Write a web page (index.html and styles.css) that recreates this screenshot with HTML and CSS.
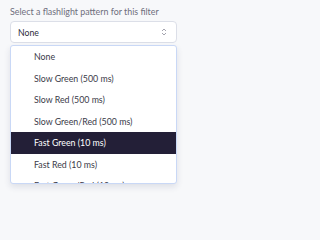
FILE: index.html
```html
<!DOCTYPE html>
<html>
<head>
<meta charset="utf-8">
<link rel="stylesheet" href="styles.css">
</head>
<body>
<div class="field">
  <div class="label">Select a flashlight pattern for this filter</div>
  <div class="select">
    <span class="value">None</span>
    <svg class="chev" width="6" height="8" viewBox="0 0 6 8"><path d="M1 3 L3 1 L5 3 M1 5 L3 7 L5 5" fill="none" stroke="#9a9aa6" stroke-width="0.9"/></svg>
  </div>
  <div class="menu">
    <div class="opt">None</div>
    <div class="opt">Slow Green (500 ms)</div>
    <div class="opt">Slow Red (500 ms)</div>
    <div class="opt">Slow Green/Red (500 ms)</div>
    <div class="opt active">Fast Green (10 ms)</div>
    <div class="opt">Fast Red (10 ms)</div>
    <div class="opt">Fast Green/Red (10 ms)</div>
  </div>
</div>
</body>
</html>
```
FILE: styles.css
```css
html, body {
  margin: 0;
  padding: 0;
  background: #f7f8fa;
  width: 200px;
  height: 200px;
  overflow: hidden;
  font-family: Lato, "Noto Sans", sans-serif;
}
.field {
  display: flex;
  flex-direction: column;
  padding: 6px 23px 0 10px;
}
.label {
  font-size: 8.9px;
  line-height: 11px;
  color: #6e6e7c;
  height: 15px;
  white-space: nowrap;
}
.select {
  height: 20px;
  background: #fff;
  border: 1px solid #dcdfe8;
  border-radius: 4px;
  display: flex;
  align-items: center;
  justify-content: space-between;
  padding: 0 9px 0 7px;
  font-size: 8.7px;
  color: #2c2c3a;
}
.chev { display: block; }
.menu {
  margin-top: 2px;
  background: #fff;
  border: 1px solid #c9d8f6;
  border-radius: 3px;
  box-shadow: 0 3px 6px rgba(40, 50, 90, 0.12);
  height: 137px;
  overflow: hidden;
}
.opt {
  height: 21.5px;
  line-height: 21.5px;
  padding-left: 23px;
  font-size: 8.8px;
  color: #3a3a48;
  white-space: nowrap;
}
.opt.active {
  background: #231f37;
  color: #fff;
}
```
